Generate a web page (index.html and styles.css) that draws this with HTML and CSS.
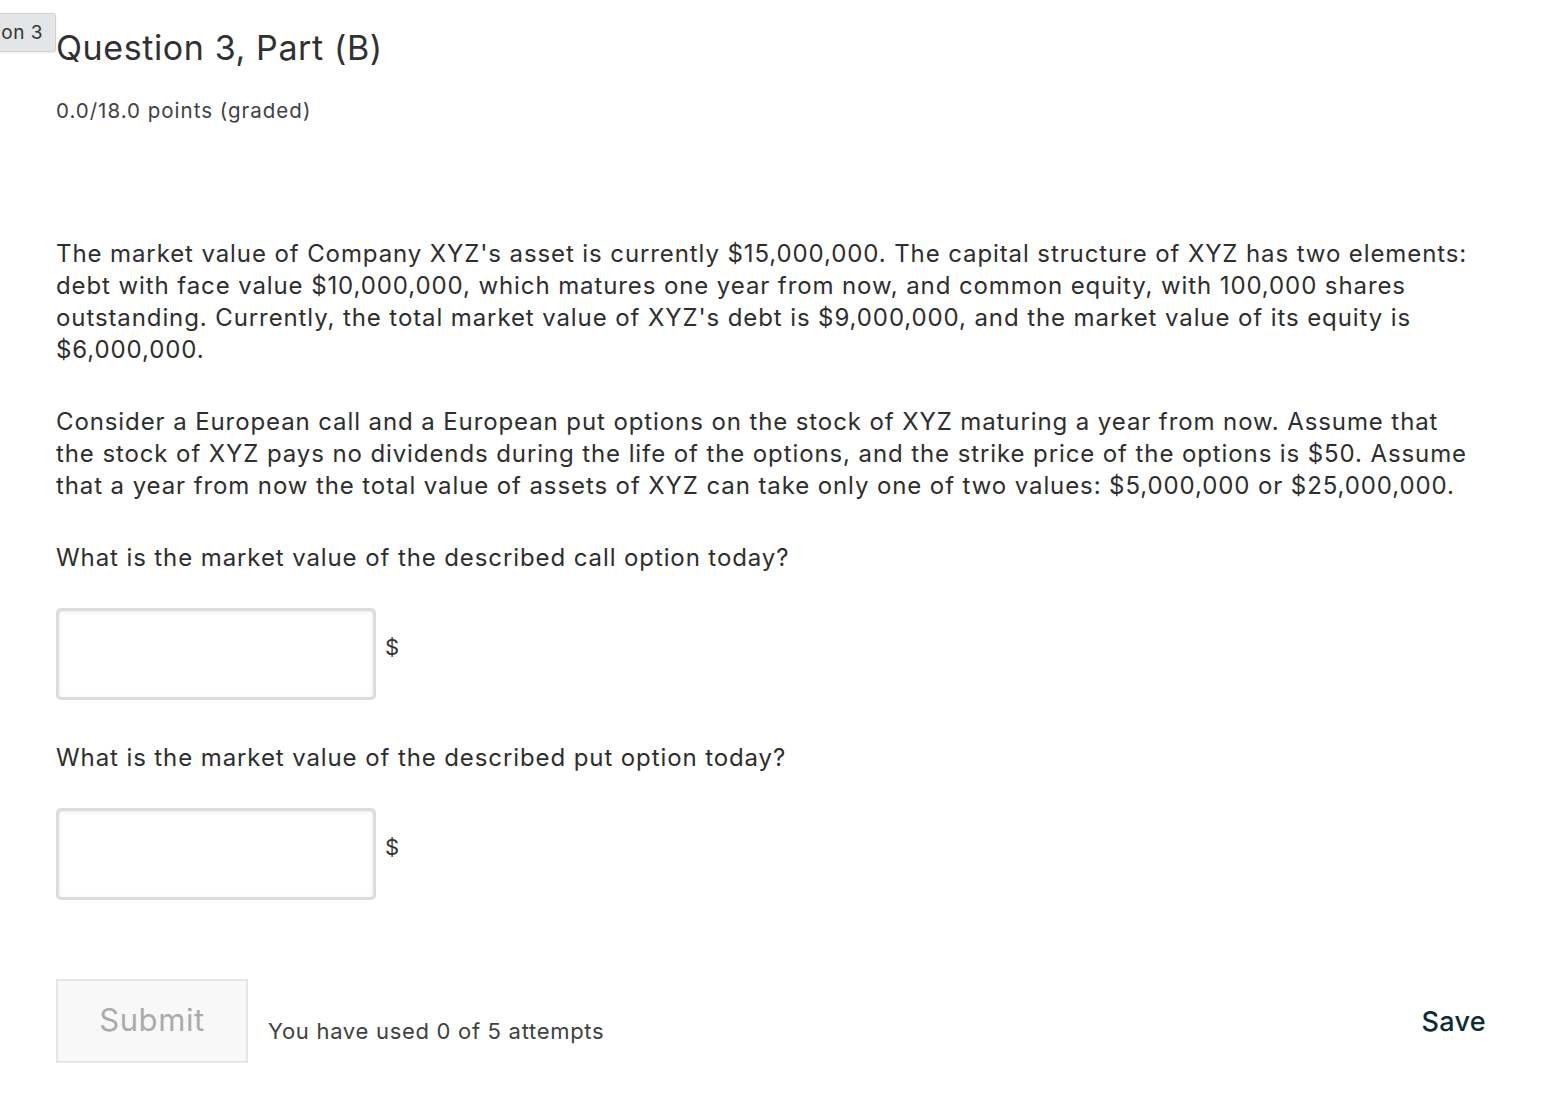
FILE: index.html
```html
<!DOCTYPE html>
<html lang="en">

<head>
    <meta charset="UTF-8">
    <title>Question 3, Part (B)</title>
    <link rel="stylesheet" href="styles.css">
</head>

<body>
    <div class="tab">Question 3</div>
    <div class="problem">
        <h3 class="title">Question 3, Part (B)</h3>
        <div class="points">0.0/18.0 points (graded)</div>

        <p class="first">The market value of Company XYZ's asset is currently $15,000,000. The capital structure of XYZ has two elements: debt with face value $10,000,000, which matures one year from now, and common equity, with 100,000 shares outstanding. Currently, the total market value of XYZ's debt is $9,000,000, and the market value of its equity is $6,000,000.</p>

        <p>Consider a European call and a European put options on the stock of XYZ maturing a year from now. Assume that the stock of XYZ pays no dividends during the life of the options, and the strike price of the options is $50. Assume that a year from now the total value of assets of XYZ can take only one of two values: $5,000,000 or $25,000,000.</p>

        <p>What is the market value of the described call option today?</p>
        <div class="answer">
            <input type="text" class="field">
            <span class="unit">$</span>
        </div>

        <p class="q2">What is the market value of the described put option today?</p>
        <div class="answer">
            <input type="text" class="field">
            <span class="unit">$</span>
        </div>

        <div class="actions">
            <button class="submit" disabled>Submit</button>
            <span class="attempts">You have used 0 of 5 attempts</span>
            <span class="save">Save</span>
        </div>
    </div>
</body>

</html>
```

FILE: styles.css
```css
body {
    margin: 0;
    background: #fff;
    font-family: Inter, "Open Sans", sans-serif;
    color: #2e2e2e;
}

.tab {
    position: absolute;
    top: 13px;
    left: -80px;
    width: 122px;
    height: 37px;
    padding-right: 12px;
    background: #e4e5e6;
    border: 1px solid #d2d2d2;
    border-radius: 3px;
    font-size: 19px;
    letter-spacing: 0.5px;
    line-height: 37px;
    text-align: right;
    white-space: nowrap;
    color: #333;
    box-shadow: 0 1px 2px rgba(0, 0, 0, 0.08);
}

.problem {
    width: 1430px;
    padding: 26px 0 0 56px;
}

.title {
    margin: 0;
    font-size: 34px;
    font-weight: 400;
    letter-spacing: 0.6px;
    line-height: 44px;
    color: #313131;
}

.points {
    margin-top: 27px;
    font-size: 20.5px;
    letter-spacing: 1px;
    line-height: 28px;
    color: #414141;
}

p {
    max-width: 1418px;
    margin: 40px 0 0;
    font-size: 24px;
    letter-spacing: 0.9px;
    line-height: 32px;
}

p.first {
    margin-top: 113px;
}

p.q2 {
    margin-top: 42px;
}

.answer {
    display: flex;
    align-items: center;
    gap: 9px;
    margin-top: 34px;
}

.field {
    box-sizing: border-box;
    width: 320px;
    height: 92px;
    margin: 0;
    border: 3px solid #dcdcdc;
    border-radius: 5px;
    background: #fff;
    box-shadow: inset 0 1px 4px rgba(0, 0, 0, 0.08);
}

.unit {
    margin-bottom: 14px;
    font-size: 22px;
    color: #333;
}

.actions {
    display: flex;
    align-items: center;
    margin-top: 79px;
}

.submit {
    box-sizing: border-box;
    width: 192px;
    height: 84px;
    border: 2px solid #e6e6e6;
    border-radius: 0;
    background: #f8f8f8;
    font-family: Inter, "Open Sans", sans-serif;
    font-size: 31px;
    letter-spacing: 0.6px;
    color: #ababab;
    padding: 0 0 3px;
}

.attempts {
    margin: 20px 0 0 20px;
    font-size: 22px;
    letter-spacing: 0.7px;
    color: #414141;
}

.save {
    margin-left: auto;
    font-size: 27px;
    font-weight: 500;
    letter-spacing: 0.3px;
    color: #0e2b36;
}
```
